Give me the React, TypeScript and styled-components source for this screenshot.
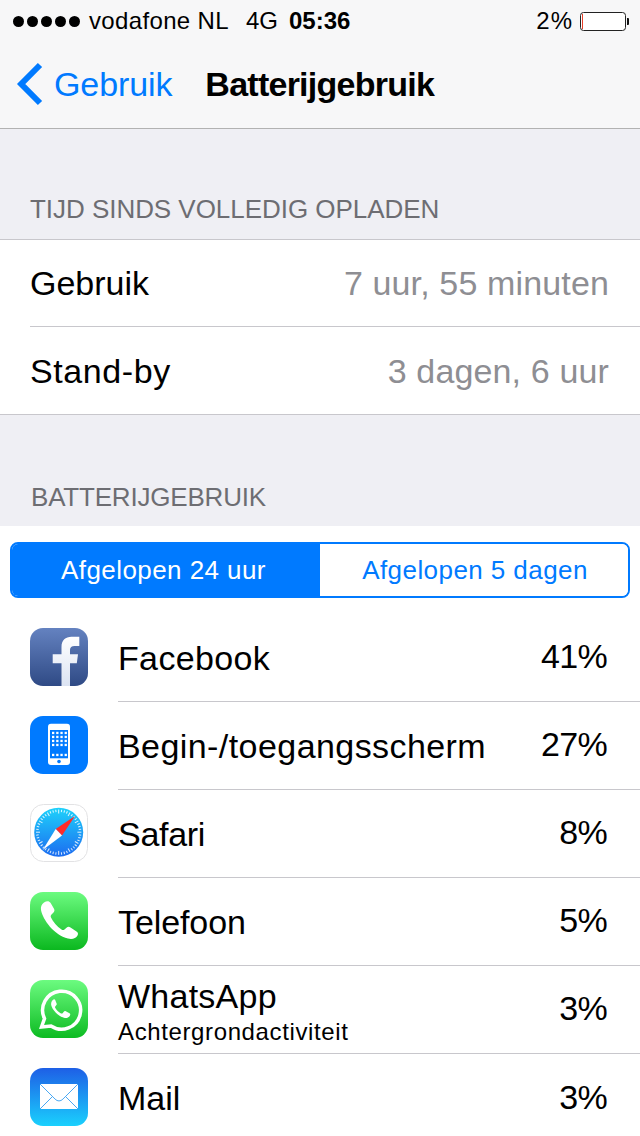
import { ReactElement, ReactNode } from "react";
import styled, { createGlobalStyle } from "styled-components";

const GlobalStyle = createGlobalStyle`
  html, body {
    margin: 0;
    padding: 0;
    background: #efeff4;
    font-family: "Liberation Sans", Arial, sans-serif;
    color: #000;
  }
`;

const Screen = styled.div`
  width: 640px;
  height: 1136px;
  overflow: hidden;
  background: #efeff4;
`;

const Header = styled.header`
  height: 128px;
  background: #f7f7f8;
  border-bottom: 1px solid #b2b2b2;
`;

const StatusBar = styled.div`
  height: 40px;
  display: flex;
  align-items: center;
  padding: 2px 11px 0 13px;
  box-sizing: border-box;
  font-size: 24px;
`;

const Dots = styled.div`
  display: flex;
  gap: 3px;
  margin-right: 9px;
`;

const Dot = styled.span`
  width: 11px;
  height: 11px;
  border-radius: 50%;
  background: #000;
`;

const Carrier = styled.span`
  margin-right: 17px;
  letter-spacing: 0.35px;
`;

const Network = styled.span`
  margin-right: 11px;
`;

const Clock = styled.span`
  font-weight: 700;
`;

const BatteryGroup = styled.div`
  margin-left: auto;
  display: flex;
  align-items: center;
  gap: 7px;
  letter-spacing: 1px;
`;

const NavBar = styled.nav`
  height: 88px;
  display: flex;
  align-items: center;
  padding: 0 0 0 16px;
`;

const BackLink = styled.div`
  display: flex;
  align-items: center;
  color: #007aff;
  font-size: 34px;
  letter-spacing: -0.1px;
  gap: 10px;
  margin-right: 33px;
`;

const NavTitle = styled.div`
  font-size: 34px;
  font-weight: 700;
  letter-spacing: -0.75px;
`;

const SectionTitle = styled.div<{ $height: number; $bottom: number; $indent: number; $tracking: number }>`
  height: ${(p) => p.$height}px;
  box-sizing: border-box;
  padding: 0 30px ${(p) => p.$bottom}px ${(p) => p.$indent}px;
  display: flex;
  align-items: flex-end;
  font-size: 26px;
  letter-spacing: ${(p) => p.$tracking}px;
  color: #6d6d72;
`;

const InfoGroup = styled.section`
  background: #fff;
  border-top: 1px solid #c8c7cc;
  border-bottom: 1px solid #c8c7cc;
`;

const InfoRow = styled.div<{ $divided?: boolean }>`
  height: 87px;
  margin-left: 30px;
  padding: ${(p) => (p.$divided ? "0" : "1px")} 31px 0 0;
  display: flex;
  align-items: center;
  justify-content: space-between;
  font-size: 34px;
  box-sizing: border-box;
  border-bottom: ${(p) => (p.$divided ? "1px solid #c8c7cc" : "none")};
`;

const InfoLabel = styled.span<{ $tracking?: number }>`
  letter-spacing: ${(p) => p.$tracking ?? 0}px;
`;

const InfoValue = styled.span`
  color: #8e8e93;
  letter-spacing: 0.14px;
`;

const UsagePanel = styled.section`
  background: #fff;
  padding-top: 16px;
`;

const Segmented = styled.div`
  margin: 0 10px;
  height: 56px;
  display: flex;
  box-sizing: border-box;
  border: 2px solid #007aff;
  border-radius: 8px;
  overflow: hidden;
`;

const Segment = styled.div<{ $active?: boolean }>`
  display: flex;
  align-items: center;
  justify-content: center;
  box-sizing: border-box;
  font-size: 26px;
  letter-spacing: 0.43px;
  width: 308px;
  padding: ${(p) => (p.$active ? "0 5px 0 0" : "0 0 0 2px")};
  background: ${(p) => (p.$active ? "#007aff" : "#fff")};
  color: ${(p) => (p.$active ? "#fff" : "#007aff")};
`;

const AppList = styled.div`
  margin-top: 16px;
`;

const AppRow = styled.div`
  height: 88px;
  display: flex;
  align-items: center;
  padding-left: 30px;
`;

const AppIcon = styled.div`
  width: 58px;
  height: 58px;
  flex: none;
  margin-top: -2px;
  svg {
    display: block;
  }
`;

const AppBody = styled.div<{ $last?: boolean }>`
  flex: 1;
  align-self: stretch;
  margin-left: 30px;
  padding-right: 33px;
  display: flex;
  align-items: center;
  justify-content: space-between;
  border-bottom: ${(p) => (p.$last ? "none" : "1px solid #c8c7cc")};
`;

const AppText = styled.div`
  display: flex;
  flex-direction: column;
`;

const AppName = styled.span<{ $tracking: number }>`
  font-size: 34px;
  line-height: 38px;
  letter-spacing: ${(p) => p.$tracking}px;
`;

const AppNote = styled.span`
  font-size: 24px;
  line-height: 28px;
  letter-spacing: 0.62px;
  margin: 3px 0 -3px;
`;

const Percent = styled.span`
  font-size: 34px;
  letter-spacing: -0.7px;
  margin-top: -2px;
`;

const BatteryIcon = () => (
  <svg width="49" height="19" viewBox="0 0 49 19">
    <rect x="0.5" y="0.5" width="45" height="18" rx="3" fill="#fff" stroke="#222" />
    <rect x="2" y="2" width="1" height="15" fill="#e8402a" />
    <path d="M47 6h1a1 1 0 0 1 1 1v5a1 1 0 0 1-1 1h-1z" fill="#111" />
  </svg>
);

const BackChevron = () => (
  <svg width="28" height="44" viewBox="0 0 28 44">
    <path d="M24 3 L5.200 22 L24 41" fill="none" stroke="#007aff" strokeWidth="6" />
  </svg>
);

const FacebookIcon = () => (
  <svg width="58" height="58" viewBox="0 0 58 58">
    <defs>
      <linearGradient id="fb-bg" x1="0" y1="0" x2="0" y2="1">
        <stop offset="0" stopColor="#6482c0" />
        <stop offset="1" stopColor="#2f4a85" />
      </linearGradient>
      <linearGradient id="fb-f" x1="0" y1="0" x2="0" y2="1">
        <stop offset="0" stopColor="#fff" />
        <stop offset="1" stopColor="#dbe3f2" />
      </linearGradient>
    </defs>
    <rect width="58" height="58" rx="13" fill="url(#fb-bg)" />
    <path
      d="M31.500 58V35.300H22.700V26.300H31.500V19C31.500 12 35.500 8.700 41.500 8.700H49.300V18H44.500C41.500 18 40 19.500 40 22V26.300H48L46.800 35.300H40V58Z"
      fill="url(#fb-f)"
    />
  </svg>
);

const HomeScreenIcon = () => {
  const grid: ReactNode[] = [];
  for (let c = 0; c < 4; c++) {
    for (let r = 0; r < 4; r++) {
      grid.push(<rect key={`${r}-${c}`} x={22 + c * 4.2} y={15.800 + r * 4} width="2.300" height="2.300" fill="#fff" />);
    }
    grid.push(<rect key={`d${c}`} x={22 + c * 4.2} y={37.800} width="2.300" height="2.300" fill="#fff" />);
  }
  return (
    <svg width="58" height="58" viewBox="0 0 58 58">
      <rect width="58" height="58" rx="13" fill="#007aff" />
      <rect x="18" y="7.700" width="22" height="41.300" rx="3" fill="#fff" />
      <rect x="20" y="14" width="18" height="28.300" fill="#007aff" />
      {grid}
      <circle cx="29" cy="45.500" r="1.800" fill="#007aff" />
    </svg>
  );
};

const SafariIcon = () => {
  const ticks: ReactNode[] = [];
  for (let i = 0; i < 48; i++) {
    ticks.push(
      <line
        key={i}
        x1="28.700"
        y1="5.500"
        x2="28.700"
        y2={i % 4 === 0 ? 9.500 : 8}
        stroke="#fff"
        strokeOpacity="0.85"
        strokeWidth="1"
        transform={`rotate(${i * 7.5} 28.700 28.200)`}
      />,
    );
  }
  return (
    <svg width="58" height="58" viewBox="0 0 58 58">
      <defs>
        <linearGradient id="safari-bg" x1="0" y1="0" x2="0" y2="1">
          <stop offset="0" stopColor="#1ed2fb" />
          <stop offset="1" stopColor="#1c6cf0" />
        </linearGradient>
      </defs>
      <rect x="0.5" y="0.5" width="57" height="57" rx="13" fill="#fff" stroke="#e2e2e4" />
      <circle cx="28.700" cy="28.200" r="24.500" fill="url(#safari-bg)" />
      {ticks}
      <path d="M45 12 L25.700 25 L32 31.500 Z" fill="#ff2a2a" />
      <path d="M12.700 46 L25.700 25 L32 31.500 Z" fill="#fff" />
    </svg>
  );
};

const PhoneIcon = () => (
  <svg width="58" height="58" viewBox="0 0 58 58">
    <defs>
      <linearGradient id="phone-bg" x1="0" y1="0" x2="0" y2="1">
        <stop offset="0" stopColor="#6cfb80" />
        <stop offset="1" stopColor="#0bb81f" />
      </linearGradient>
    </defs>
    <rect width="58" height="58" rx="13" fill="url(#phone-bg)" />
    <path
      d="M14 10.500C11.500 12 10.500 15 11 18C13 28 24 43 38 46.500C42 47.500 46 46.500 47.500 43.500C48.500 41.500 48 40.500 46.500 39.500L40.500 35.500C39 34.500 37.800 34.600 36.500 35.800L34.500 37.500C33.500 38.300 32.500 38.200 31.500 37.500C27 34.500 23 29.500 21 25.500C20.500 24.400 20.600 23.400 21.500 22.500L23.500 20.500C24.600 19.300 24.700 18.200 24 16.800L20.500 10.800C19 8.500 16.500 8.800 14 10.500Z"
      fill="#fff"
    />
  </svg>
);

const WhatsAppIcon = () => (
  <svg width="58" height="58" viewBox="0 0 58 58">
    <defs>
      <linearGradient id="wa-bg" x1="0" y1="0" x2="0" y2="1">
        <stop offset="0" stopColor="#6cfb80" />
        <stop offset="1" stopColor="#0dbb22" />
      </linearGradient>
    </defs>
    <rect width="58" height="58" rx="13" fill="url(#wa-bg)" />
    <path
      d="M11.500 47L14.500 38.500A19 19 0 1 1 21 46Z"
      fill="none"
      stroke="#fff"
      strokeWidth="3.500"
      strokeLinejoin="miter"
    />
    <path
      d="M23.500 19.500C22 20.500 20.800 22.500 21.200 25C22 29.500 28 36 34 37.800C36.500 38.500 39 37.500 40 35.500C40.500 34.300 40.300 33.600 39.500 33.200L35.800 31.300C35 30.900 34.400 31 33.800 31.700L32.600 33.200C32.100 33.700 31.600 33.700 31 33.400C28.500 32.200 26.500 30 25.200 27.800C24.900 27.200 25 26.800 25.400 26.300L26.400 25C26.800 24.500 26.900 24 26.600 23.400L25.200 20C24.800 19.200 24.300 19.100 23.500 19.500Z"
      fill="#fff"
    />
  </svg>
);

const MailIcon = () => (
  <svg width="58" height="58" viewBox="0 0 58 58">
    <defs>
      <linearGradient id="mail-bg" x1="0" y1="0" x2="0" y2="1">
        <stop offset="0" stopColor="#1e5fe6" />
        <stop offset="1" stopColor="#1ad0fd" />
      </linearGradient>
    </defs>
    <rect width="58" height="58" rx="13" fill="url(#mail-bg)" />
    <rect x="10" y="16" width="38" height="25" fill="#fff" />
    <path
      d="M10 16 L25 31 C27.500 33.500 30.500 33.500 33 31 L48 16 M10 41 L22.500 28.500 M48 41 L35.500 28.500"
      fill="none"
      stroke="#4aa8f2"
      strokeWidth="1"
    />
  </svg>
);

type AppUsage = {
  name: string;
  tracking: number;
  note?: string;
  percent: string;
  icon: ReactElement;
};

const apps: AppUsage[] = [
  { name: "Facebook", tracking: 0.35, percent: "41%", icon: <FacebookIcon /> },
  { name: "Begin-/toegangsscherm", tracking: 0.43, percent: "27%", icon: <HomeScreenIcon /> },
  { name: "Safari", tracking: -0.3, percent: "8%", icon: <SafariIcon /> },
  { name: "Telefoon", tracking: -0.1, percent: "5%", icon: <PhoneIcon /> },
  { name: "WhatsApp", tracking: 0.25, note: "Achtergrondactiviteit", percent: "3%", icon: <WhatsAppIcon /> },
  { name: "Mail", tracking: 0, percent: "3%", icon: <MailIcon /> },
];

export default function App(): ReactElement {
  return (
    <Screen>
      <GlobalStyle />
      <Header>
        <StatusBar>
          <Dots>
            {[0, 1, 2, 3, 4].map((i) => (
              <Dot key={i} />
            ))}
          </Dots>
          <Carrier>vodafone NL</Carrier>
          <Network>4G</Network>
          <Clock>05:36</Clock>
          <BatteryGroup>
            <span>2%</span>
            <BatteryIcon />
          </BatteryGroup>
        </StatusBar>
        <NavBar>
          <BackLink>
            <BackChevron />
            Gebruik
          </BackLink>
          <NavTitle>Batterijgebruik</NavTitle>
        </NavBar>
      </Header>

      <SectionTitle $height={110} $bottom={14} $indent={30} $tracking={-0.04}>
        TIJD SINDS VOLLEDIG OPLADEN
      </SectionTitle>
      <InfoGroup>
        <InfoRow $divided>
          <InfoLabel>Gebruik</InfoLabel>
          <InfoValue>7 uur, 55 minuten</InfoValue>
        </InfoRow>
        <InfoRow>
          <InfoLabel $tracking={0.6}>Stand-by</InfoLabel>
          <InfoValue>3 dagen, 6 uur</InfoValue>
        </InfoRow>
      </InfoGroup>

      <SectionTitle $height={111} $bottom={13} $indent={31} $tracking={-0.2}>
        BATTERIJGEBRUIK
      </SectionTitle>
      <UsagePanel>
        <Segmented>
          <Segment $active>Afgelopen 24 uur</Segment>
          <Segment>Afgelopen 5 dagen</Segment>
        </Segmented>
        <AppList>
          {apps.map((app, i) => (
            <AppRow key={app.name}>
              <AppIcon>{app.icon}</AppIcon>
              <AppBody $last={i === apps.length - 1}>
                <AppText>
                  <AppName $tracking={app.tracking}>{app.name}</AppName>
                  {app.note && <AppNote>{app.note}</AppNote>}
                </AppText>
                <Percent>{app.percent}</Percent>
              </AppBody>
            </AppRow>
          ))}
        </AppList>
      </UsagePanel>
    </Screen>
  );
}
